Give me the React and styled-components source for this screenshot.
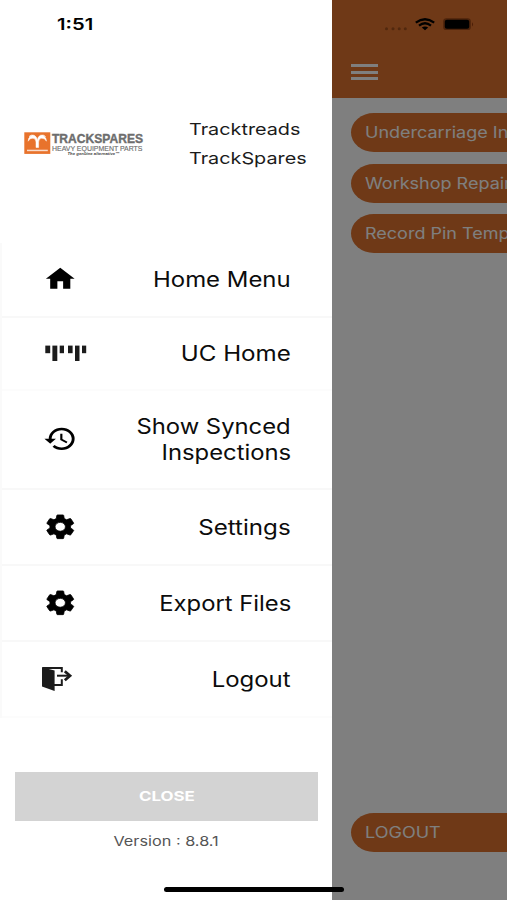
import React from 'react'
import styled, { createGlobalStyle, ThemeProvider } from 'styled-components'
import { MdHome, MdHistory, MdSettings } from 'react-icons/md'

const theme = {
  colors: {
    orange: '#de722e',
    white: '#ffffff',
    divider: '#f8f8f8',
    dividerFaint: '#fcfcfc',
    disabled: '#d3d3d3'
  },
  sizes: {
    drawer: '332px'
  }
}

const GlobalStyle = createGlobalStyle`
  * { box-sizing: border-box; }
  body {
    margin: 0;
    background: #fff;
    font-family: Inter, 'Liberation Sans', sans-serif;
    overflow: hidden;
  }
  svg { display: block; }
  button { border: 0; font-family: inherit; }
`

// wide lettering, grown from the given side
const Wide = styled.span`
  display: inline-block;
  white-space: nowrap;
  transform: scaleX(${({ scale = 1.2 }) => scale});
  transform-origin: ${({ from = 'left' }) => from} center;
`

const Screen = styled.div`
  position: relative;
  width: 507px;
  height: 900px;
  overflow: hidden;
`

const Page = styled.main`
  height: 100%;
  padding-left: 351px;
  display: flex;
  flex-direction: column;
  background: linear-gradient(${({ theme }) => theme.colors.orange} 98px, #fff 98px);
`

const PageHeader = styled.header`
  flex: none;
  height: 113px;
  padding-top: 17px;
`

const StatusIcons = styled.div`
  height: 47px;
  padding-left: 33px;
`

const Burger = styled.div`
  width: 27px;
  height: 16px;
  display: flex;
  flex-direction: column;
  justify-content: space-between;

  i {
    height: 3px;
    background: #fff;
  }
`

const Pills = styled.div`
  flex: 1;
  display: flex;
  flex-direction: column;
  gap: 11.5px;
  padding-bottom: 48.5px;
`

const Pill = styled.button`
  flex: none;
  height: 39px;
  padding: 0 0 0 14px;
  text-align: left;
  font-size: 15.8px;
  color: #fff;
  background: ${({ theme }) => theme.colors.orange};
  border-radius: 23px 0 0 23px / 19.5px 0 0 19.5px;
  overflow: hidden;

  &:last-child { margin-top: auto; }
`

const Scrim = styled.div`
  position: absolute;
  inset: 0;
  background: rgba(0, 0, 0, 0.5);
`

const Drawer = styled.aside`
  position: absolute;
  top: 0;
  left: 0;
  bottom: 0;
  width: ${({ theme }) => theme.sizes.drawer};
  display: flex;
  flex-direction: column;
  background: ${({ theme }) => theme.colors.white};
`

const Clock = styled.div`
  height: 48px;
  padding-left: 56.5px;
  font-size: 16px;
  font-weight: 600;
  line-height: 49px;
`

const Brand = styled.div`
  height: 195px;
  padding: 67px 0 0 24px;
  display: flex;
  align-items: flex-start;

  svg { margin-top: 16px; }
`

const BrandNames = styled.div`
  padding-left: 44.5px;
  font-size: 16.5px;
  line-height: 29.3px;
  color: #1b1b1b;

  div { height: 29.3px; }
`

const Menu = styled.nav`
  border-left: 2px solid #fafafa;
`

const MenuItem = styled.a`
  height: ${({ height }) => height}px;
  padding: 0 41px ${({ lift = 0 }) => lift}px 38px;
  display: flex;
  align-items: center;
  justify-content: space-between;
  border-bottom: 2px solid ${({ theme, faint }) => faint ? theme.colors.dividerFaint : theme.colors.divider};
  color: #0c0c0c;
  font-size: 20.8px;
  line-height: 25.5px;
  text-align: right;

  svg { flex: none; }
`

const MenuLabel = styled.div`
  display: flex;
  flex-direction: column;
  align-items: flex-end;
  padding-top: 2px;
`

const MaterialIcon = styled.span`
  padding-left: 2.5px;
  color: #000;

  svg {
    width: 34.5px;
    height: 29.6px;
    stroke-width: ${({ weight }) => weight};
  }

  path[fill='none'] { stroke: none; }
`

const CloseButton = styled.button`
  margin: 54px 14px 0 15px;
  height: 49px;
  padding: 0 0 1px;
  font-size: 13.2px;
  font-weight: 700;
  color: #fff;
  background: ${({ theme }) => theme.colors.disabled};
`

const Version = styled.div`
  margin-top: 10px;
  font-size: 13px;
  line-height: 20px;
  text-align: center;
  color: #555;
`

const HomeIndicator = styled.div`
  position: absolute;
  left: 164px;
  bottom: 8px;
  width: 180px;
  height: 5px;
  border-radius: 3px;
  background: #000;
`

const StatusGlyphs = () => (
  <svg width='94' height='16' viewBox='384 17 94 16'>
    <g fill='#a2501c'>
      <circle cx='386.5' cy='28.7' r='1.5' />
      <circle cx='393' cy='28.7' r='1.5' />
      <circle cx='399.2' cy='28.7' r='1.5' />
      <circle cx='405.3' cy='28.7' r='1.5' />
    </g>
    <g fill='none' stroke='#000' strokeWidth='2.3'>
      <path d='M415.8 22.6 Q425 15.8 434.2 22.6' />
      <path d='M419 25.6 Q425 21 431 25.6' />
    </g>
    <path d='M421.8 27.6 Q425 25.4 428.2 27.6 L425 30.3 Z' />
    <rect x='443.2' y='18.3' width='27.6' height='11.8' rx='3.2' fill='#9a4716' />
    <rect x='444.8' y='19.8' width='24.4' height='8.9' rx='2' />
    <path d='M472 22.2 Q474.2 24.3 472 26.4 Z' fill='#9a3f10' />
  </svg>
)

const BrandLogo = () => (
  <svg width='120' height='25' viewBox='24 131 120 25'>
    <rect x='24.3' y='132.3' width='26' height='21.6' fill='#e8732c' />
    <g fill='#fff'>
      <path d='M36 147.5 V142 Q35.8 138.5 33 138.2 Q29.6 138 28.2 141.2 Q28.2 137.3 31 136.2 Q29.8 136 29 136.6 Q31 134.2 34 135.2 Q37 136.5 37.3 140.4 Q37.6 136.5 40.6 135.2 Q43.6 134.2 45.6 136.6 Q44.8 136 43.6 136.2 Q46.4 137.3 46.4 141.2 Q45 138 41.6 138.2 Q38.8 138.5 38.6 142 V147.5 Z' stroke='#fff' strokeWidth='0.5' />
      <rect x='27' y='149.7' width='20.8' height='1.5' opacity='0.75' />
    </g>
    <g fontFamily="'Liberation Sans', sans-serif" fill='#6d6d6d'>
      <text x='52' y='143.2' fontSize='13.4' fontWeight='700' stroke='#6d6d6d' strokeWidth='0.4' textLength='91' lengthAdjust='spacingAndGlyphs'>TRACKSPARES</text>
      <text x='52' y='150.5' fontSize='7.9' stroke='#6d6d6d' strokeWidth='0.15' textLength='90.5' lengthAdjust='spacingAndGlyphs'>HEAVY EQUIPMENT PARTS</text>
      <text x='67.5' y='154.6' fontSize='4.4' fontWeight='700' fontStyle='italic' fill='#444' textLength='52' lengthAdjust='spacingAndGlyphs'>The genuine alternative™</text>
    </g>
  </svg>
)

const TracksIcon = () => (
  <svg width='50' height='17' viewBox='40 345 50 17' fill='#1c1c1c'>
    <rect x='45.3' y='345.6' width='4.9' height='7.6' />
    <rect x='52.4' y='345.6' width='4.9' height='15.4' />
    <rect x='59.7' y='345.6' width='4.3' height='7.6' />
    <rect x='68' y='345.6' width='4.6' height='7.6' />
    <rect x='75' y='345.6' width='4.5' height='15.4' />
    <rect x='82' y='345.6' width='4.2' height='7.6' />
  </svg>
)

const ExitIcon = () => (
  <svg width='34' height='26' viewBox='40 666 34 26'>
    <path d='M42 667.3 L54.6 670.4 V691 L42 686.6 Z' fill='#1c1c1c' />
    <g fill='none' stroke='#1c1c1c' strokeWidth='2'>
      <path d='M42.4 668.1 H61.8 V672.3' />
      <path d='M61.8 679.3 V685 H54' />
      <path d='M57 675.7 H70' />
      <path d='M64.8 671.2 L70 675.7 L64.8 680.2' strokeWidth='2.8' />
    </g>
  </svg>
)

const material = (Icon, weight = 0) => (
  <MaterialIcon weight={weight}><Icon preserveAspectRatio='none' /></MaterialIcon>
)

const menu = [
  { lines: ['Home Menu'], scale: 1.15, height: 75, lift: 2, icon: material(MdHome) },
  { lines: ['UC Home'], scale: 1.16, height: 73, lift: 1, faint: true, icon: <TracksIcon /> },
  { lines: ['Show Synced', 'Inspections'], scale: 1.145, height: 99, lift: 2, icon: material(MdHistory) },
  { lines: ['Settings'], scale: 1.16, height: 76, icon: material(MdSettings, 0.6) },
  { lines: ['Export Files'], scale: 1.145, height: 76, icon: material(MdSettings, 0.6) },
  { lines: ['Logout'], scale: 1.15, height: 76, faint: true, icon: <ExitIcon /> }
]

const pills = ['Undercarriage Inspection', 'Workshop Repair', 'Record Pin Template', 'LOGOUT']

const App = () => (
  <ThemeProvider theme={theme}>
    <GlobalStyle />
    <Screen>
      <Page>
        <PageHeader>
          <StatusIcons><StatusGlyphs /></StatusIcons>
          <Burger><i /><i /><i /></Burger>
        </PageHeader>
        <Pills>
          {pills.map(p => <Pill key={p}><Wide scale={1.14}>{p}</Wide></Pill>)}
        </Pills>
      </Page>
      <Scrim />
      <Drawer>
        <Clock><Wide scale={1.26}>1:51</Wide></Clock>
        <Brand>
          <BrandLogo />
          <BrandNames>
            <div><Wide>Tracktreads</Wide></div>
            <div><Wide>TrackSpares</Wide></div>
          </BrandNames>
        </Brand>
        <Menu>
          {menu.map(m => (
            <MenuItem key={m.lines[0]} height={m.height} lift={m.lift} faint={m.faint}>
              {m.icon}
              <MenuLabel>
                {m.lines.map(l => <Wide key={l} from='right' scale={m.scale}>{l}</Wide>)}
              </MenuLabel>
            </MenuItem>
          ))}
        </Menu>
        <CloseButton><Wide from='center' scale={1.28}>CLOSE</Wide></CloseButton>
        <Version><Wide from='center' scale={1.25}>Version : 8.8.1</Wide></Version>
      </Drawer>
      <HomeIndicator />
    </Screen>
  </ThemeProvider>
)

export default App
